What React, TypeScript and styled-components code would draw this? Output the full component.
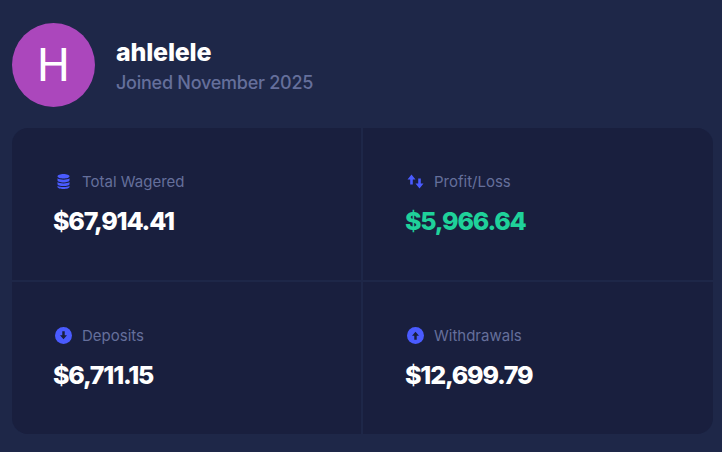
import styled, { createGlobalStyle } from 'styled-components'
import type { ReactNode } from 'react'

const GlobalStyle = createGlobalStyle`
  html, body {
    margin: 0;
    padding: 0;
    background: #1e2748;
    font-family: Inter, "Liberation Sans", sans-serif;
  }
`

const Page = styled.div`
  width: 722px;
  height: 452px;
  box-sizing: border-box;
  padding: 23px 9px 18px 12px;
  display: flex;
  flex-direction: column;
  gap: 21px;
  overflow: hidden;
`

const Profile = styled.header`
  display: flex;
  align-items: center;
  gap: 21px;
`

const Avatar = styled.div`
  width: 83px;
  height: 84px;
  border-radius: 50%;
  background: #ab47bc;
  color: #fff;
  font-family: Roboto, sans-serif;
  font-size: 46px;
  font-weight: 400;
  display: flex;
  align-items: center;
  justify-content: center;
`

const ProfileText = styled.div`
  display: flex;
  flex-direction: column;
  gap: 6px;
  padding-top: 1px;
`

const Username = styled.div`
  color: #fff;
  font-size: 25px;
  line-height: 28px;
  font-weight: 800;
  letter-spacing: -0.2px;
`

const Joined = styled.div`
  color: #656f9b;
  font-size: 18px;
  line-height: 21px;
  font-weight: 500;
  letter-spacing: -0.25px;
`

const StatsGrid = styled.section`
  flex: 1;
  display: grid;
  grid-template-columns: 349px 1fr;
  grid-template-rows: 1fr 1fr;
  gap: 2px;
  background: #1e2748;
  border-radius: 16px;
  overflow: hidden;
`

const StatCell = styled.div`
  background: #191f3e;
  padding: 43px 42px 0;
  display: flex;
  flex-direction: column;
  gap: 15px;

  &:nth-child(even) {
    padding-left: 43px;
  }
`

const StatLabel = styled.div`
  display: flex;
  align-items: center;
  gap: 10px;
  height: 20px;
  color: #656f9b;
  font-size: 15px;
`

const IconSlot = styled.span`
  width: 18px;
  height: 18px;
  display: inline-flex;
  align-items: center;
  justify-content: center;
  color: #4a5bff;
`

const StatValue = styled.div<{ $positive?: boolean }>`
  margin-left: -1px;
  color: ${({ $positive }) => ($positive ? '#1fd19a' : '#fff')};
  font-size: 25px;
  line-height: 30px;
  font-weight: 800;
  letter-spacing: -1.2px;
`

const DatabaseIcon = () => (
  <svg width="13" height="15" viewBox="0 0 13 15" fill="currentColor">
    <path d="M6.500 0C9.800 0 12.500 1 12.500 2.300S9.800 4.600 6.500 4.600 .5 3.600 .5 2.300 3.200 0 6.500 0z" />
    <path d="M.5 4.300C1.700 5.300 4 5.700 6.500 5.700S11.300 5.300 12.500 4.300V6.200C12.500 7.500 9.800 8.400 6.500 8.400S.5 7.500 .5 6.200z" />
    <path d="M.5 8C1.700 9 4 9.400 6.500 9.400S11.300 9 12.500 8V9.900C12.500 11.200 9.800 12.100 6.500 12.100S.5 11.200 .5 9.900z" />
    <path d="M.5 11.700C1.700 12.700 4 13.100 6.500 13.100S11.300 12.700 12.500 11.700V12.700C12.500 14 9.800 15 6.500 15S.5 14 .5 12.700z" />
  </svg>
)

const SwapIcon = () => (
  <svg width="17" height="15" viewBox="0 0 17 15" fill="currentColor">
    <path d="M4.500 0.500 8.500 5.500H5.800V10.500H3.200V5.500H0.500z" />
    <path d="M12.500 14.500 8.500 9.500H11.200V4.500h2.600V9.500H16.500z" />
  </svg>
)

const ArrowDownCircle = () => (
  <svg width="17" height="17" viewBox="0 0 18 18">
    <circle cx="9" cy="9" r="9" fill="currentColor" />
    <path d="M7.700 4.500h2.600v4.300h2.400L9 13 5.300 8.800h2.400z" fill="#191f3e" />
  </svg>
)

const ArrowUpCircle = () => (
  <svg width="17" height="17" viewBox="0 0 18 18">
    <circle cx="9" cy="9" r="9" fill="currentColor" />
    <path d="M7.700 13.500h2.600V9.200h2.400L9 5 5.300 9.200h2.400z" fill="#191f3e" />
  </svg>
)

interface StatProps {
  icon: ReactNode
  label: string
  value: string
  positive?: boolean
}

const Stat = ({ icon, label, value, positive }: StatProps) => (
  <StatCell>
    <StatLabel>
      <IconSlot>{icon}</IconSlot>
      {label}
    </StatLabel>
    <StatValue $positive={positive}>{value}</StatValue>
  </StatCell>
)

export default function App() {
  return (
    <Page>
      <GlobalStyle />
      <Profile>
        <Avatar>H</Avatar>
        <ProfileText>
          <Username>ahlelele</Username>
          <Joined>Joined November 2025</Joined>
        </ProfileText>
      </Profile>
      <StatsGrid>
        <Stat icon={<DatabaseIcon />} label="Total Wagered" value="$67,914.41" />
        <Stat icon={<SwapIcon />} label="Profit/Loss" value="$5,966.64" positive />
        <Stat icon={<ArrowDownCircle />} label="Deposits" value="$6,711.15" />
        <Stat icon={<ArrowUpCircle />} label="Withdrawals" value="$12,699.79" />
      </StatsGrid>
    </Page>
  )
}
